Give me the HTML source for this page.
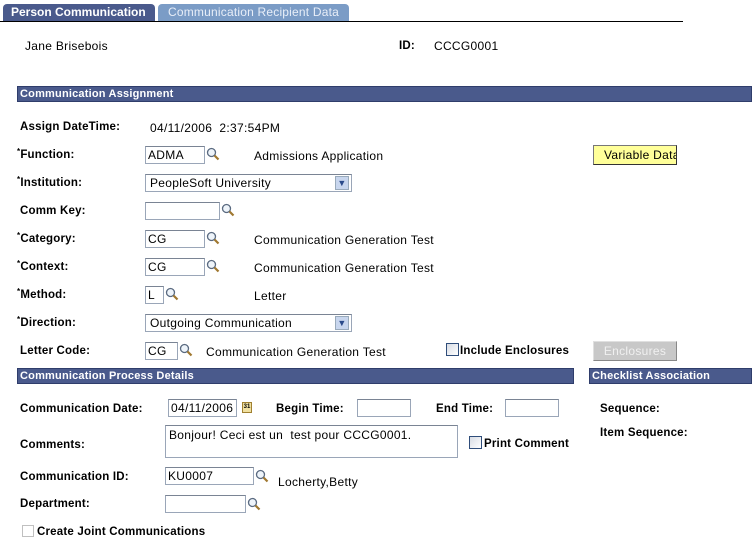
<!DOCTYPE html>
<html><head><meta charset="utf-8"><style>
body{margin:0;width:756px;height:546px;background:#fff;position:relative;overflow:hidden;font-family:"Liberation Sans",Arial,sans-serif;font-size:12px;letter-spacing:.3px;color:#000}
div,span{position:absolute}
.l{font-weight:bold;font-size:11.5px;letter-spacing:.2px;line-height:14px;white-space:nowrap}
.t{line-height:14px;white-space:nowrap}
.i{border:1px solid #9aa6b8;border-top-color:#7a8494;background:#fff;line-height:16px;padding-left:2px;box-sizing:border-box;height:18px;white-space:nowrap}
.bar{background:#4a5a8c;color:#fff;font-weight:bold;font-size:11px;letter-spacing:.2px;line-height:14px;height:16px;padding-left:2px;box-sizing:border-box;border:1px solid #2f3d6b}
.cb{width:11px;height:11px;border:1px solid #2f4d7a;background:linear-gradient(135deg,#d8dce4,#fff)}
.q{width:14px;height:14px}
.s{position:static;font-size:8px;vertical-align:top;line-height:8px}
</style></head><body>
<div style="left:3px;top:4px;width:152px;height:17px;background:#4a5a8c;border-radius:4px 4px 0 0;color:#fff;font-weight:bold;font-size:12px;letter-spacing:0;line-height:17px;text-indent:8px">Person Communication</div>
<div style="left:158px;top:4px;width:191px;height:17px;background:#7b9cc6;border-radius:4px 4px 0 0;color:#e8eef8;font-size:12px;letter-spacing:.2px;line-height:17px;text-indent:10px">Communication Recipient Data</div>
<div style="left:0;top:21px;width:683px;height:1px;background:#000"></div>

<div class="t" style="left:25px;top:39px">Jane Brisebois</div>
<div class="l" style="left:399px;top:39px">ID:</div>
<div class="t" style="left:434px;top:39px">CCCG0001</div>

<div class="bar" style="left:17px;top:86px;width:735px">Communication Assignment</div>

<div class="l" style="left:20px;top:120px">Assign DateTime:</div>
<div class="t" style="left:150px;top:121px">04/11/2006&nbsp; 2:37:54PM</div>

<div class="l" style="left:17px;top:148px"><span class="s">*</span>Function:</div>
<div class="i" style="left:145px;top:146px;width:60px">ADMA</div>
<svg class="q" style="position:absolute;left:206px;top:147px" viewBox="0 0 14 14"><circle cx="5.5" cy="5.5" r="4" fill="#eef4fa" stroke="#5a6a80" stroke-width="1.3"/><line x1="8.5" y1="8.5" x2="12.5" y2="12.5" stroke="#a07830" stroke-width="2.2"/></svg>
<div class="t" style="left:254px;top:149px">Admissions Application</div>
<div style="left:593px;top:145px;width:84px;height:20px;background:#ffff99;border:1px solid #777;border-right-color:#333;border-bottom-color:#333;box-sizing:border-box;line-height:18px;padding-left:10px;white-space:nowrap;overflow:hidden">Variable Data</div>

<div class="l" style="left:17px;top:176px"><span class="s">*</span>Institution:</div>
<div class="i" style="left:145px;top:174px;width:207px;padding-left:4px">PeopleSoft University</div>
<div style="left:335px;top:176px;width:14px;height:14px;background:#c8d6ee;border:1px solid #9ab;box-sizing:border-box;color:#2a4a8a;font-size:9px;line-height:12px;text-align:center">&#9660;</div>

<div class="l" style="left:20px;top:204px">Comm Key:</div>
<div class="i" style="left:145px;top:202px;width:75px"></div>
<svg class="q" style="position:absolute;left:221px;top:203px" viewBox="0 0 14 14"><circle cx="5.5" cy="5.5" r="4" fill="#eef4fa" stroke="#5a6a80" stroke-width="1.3"/><line x1="8.5" y1="8.5" x2="12.5" y2="12.5" stroke="#a07830" stroke-width="2.2"/></svg>

<div class="l" style="left:17px;top:232px"><span class="s">*</span>Category:</div>
<div class="i" style="left:145px;top:230px;width:60px">CG</div>
<svg class="q" style="position:absolute;left:206px;top:231px" viewBox="0 0 14 14"><circle cx="5.5" cy="5.5" r="4" fill="#eef4fa" stroke="#5a6a80" stroke-width="1.3"/><line x1="8.5" y1="8.5" x2="12.5" y2="12.5" stroke="#a07830" stroke-width="2.2"/></svg>
<div class="t" style="left:254px;top:233px">Communication Generation Test</div>

<div class="l" style="left:17px;top:260px"><span class="s">*</span>Context:</div>
<div class="i" style="left:145px;top:258px;width:60px">CG</div>
<svg class="q" style="position:absolute;left:206px;top:259px" viewBox="0 0 14 14"><circle cx="5.5" cy="5.5" r="4" fill="#eef4fa" stroke="#5a6a80" stroke-width="1.3"/><line x1="8.5" y1="8.5" x2="12.5" y2="12.5" stroke="#a07830" stroke-width="2.2"/></svg>
<div class="t" style="left:254px;top:261px">Communication Generation Test</div>

<div class="l" style="left:17px;top:288px"><span class="s">*</span>Method:</div>
<div class="i" style="left:145px;top:286px;width:19px">L</div>
<svg class="q" style="position:absolute;left:165px;top:287px" viewBox="0 0 14 14"><circle cx="5.5" cy="5.5" r="4" fill="#eef4fa" stroke="#5a6a80" stroke-width="1.3"/><line x1="8.5" y1="8.5" x2="12.5" y2="12.5" stroke="#a07830" stroke-width="2.2"/></svg>
<div class="t" style="left:254px;top:289px">Letter</div>

<div class="l" style="left:17px;top:316px"><span class="s">*</span>Direction:</div>
<div class="i" style="left:145px;top:314px;width:207px;padding-left:4px">Outgoing Communication</div>
<div style="left:335px;top:316px;width:14px;height:14px;background:#c8d6ee;border:1px solid #9ab;box-sizing:border-box;color:#2a4a8a;font-size:9px;line-height:12px;text-align:center">&#9660;</div>

<div class="l" style="left:20px;top:344px">Letter Code:</div>
<div class="i" style="left:145px;top:342px;width:33px">CG</div>
<svg class="q" style="position:absolute;left:179px;top:343px" viewBox="0 0 14 14"><circle cx="5.5" cy="5.5" r="4" fill="#eef4fa" stroke="#5a6a80" stroke-width="1.3"/><line x1="8.5" y1="8.5" x2="12.5" y2="12.5" stroke="#a07830" stroke-width="2.2"/></svg>
<div class="t" style="left:206px;top:345px">Communication Generation Test</div>
<div class="cb" style="left:446px;top:343px"></div>
<div class="l" style="left:460px;top:344px">Include Enclosures</div>
<div style="left:593px;top:341px;width:84px;height:20px;background:#c8c8c8;border:1px solid #e0e0e0;border-right-color:#888;border-bottom-color:#888;box-sizing:border-box;color:#f0f0f0;text-align:center;line-height:18px">Enclosures</div>

<div class="bar" style="left:17px;top:368px;width:557px">Communication Process Details</div>
<div class="bar" style="left:589px;top:368px;width:163px">Checklist Association</div>

<div class="l" style="left:20px;top:402px">Communication Date:</div>
<div class="i" style="left:168px;top:399px;width:69px">04/11/2006</div>
<div style="left:242px;top:402px;width:10px;height:11px;background:#f0e0a0;border:1px solid #a08030;box-sizing:border-box;font-size:6px;letter-spacing:0;line-height:9px;text-align:center;font-weight:bold">31</div>
<div class="l" style="left:276px;top:402px">Begin Time:</div>
<div class="i" style="left:357px;top:399px;width:54px"></div>
<div class="l" style="left:436px;top:402px">End Time:</div>
<div class="i" style="left:505px;top:399px;width:54px"></div>
<div class="l" style="left:600px;top:402px">Sequence:</div>
<div class="l" style="left:600px;top:426px">Item Sequence:</div>

<div class="l" style="left:20px;top:438px">Comments:</div>
<div class="i" style="left:165px;top:425px;width:293px;height:33px;line-height:18px;padding-left:3px">Bonjour! Ceci est un&nbsp; test pour CCCG0001.</div>
<div class="cb" style="left:469px;top:436px"></div>
<div class="l" style="left:484px;top:437px">Print Comment</div>

<div class="l" style="left:20px;top:470px">Communication ID:</div>
<div class="i" style="left:165px;top:467px;width:89px">KU0007</div>
<svg class="q" style="position:absolute;left:255px;top:469px" viewBox="0 0 14 14"><circle cx="5.5" cy="5.5" r="4" fill="#eef4fa" stroke="#5a6a80" stroke-width="1.3"/><line x1="8.5" y1="8.5" x2="12.5" y2="12.5" stroke="#a07830" stroke-width="2.2"/></svg>
<div class="t" style="left:278px;top:475px">Locherty,Betty</div>

<div class="l" style="left:20px;top:497px">Department:</div>
<div class="i" style="left:165px;top:495px;width:81px"></div>
<svg class="q" style="position:absolute;left:247px;top:497px" viewBox="0 0 14 14"><circle cx="5.5" cy="5.5" r="4" fill="#eef4fa" stroke="#5a6a80" stroke-width="1.3"/><line x1="8.5" y1="8.5" x2="12.5" y2="12.5" stroke="#a07830" stroke-width="2.2"/></svg>

<div style="left:22px;top:525px;width:12px;height:12px;border:1px solid #c0c0c0;box-sizing:border-box"></div>
<div class="l" style="left:37px;top:525px">Create Joint Communications</div>
</body></html>
